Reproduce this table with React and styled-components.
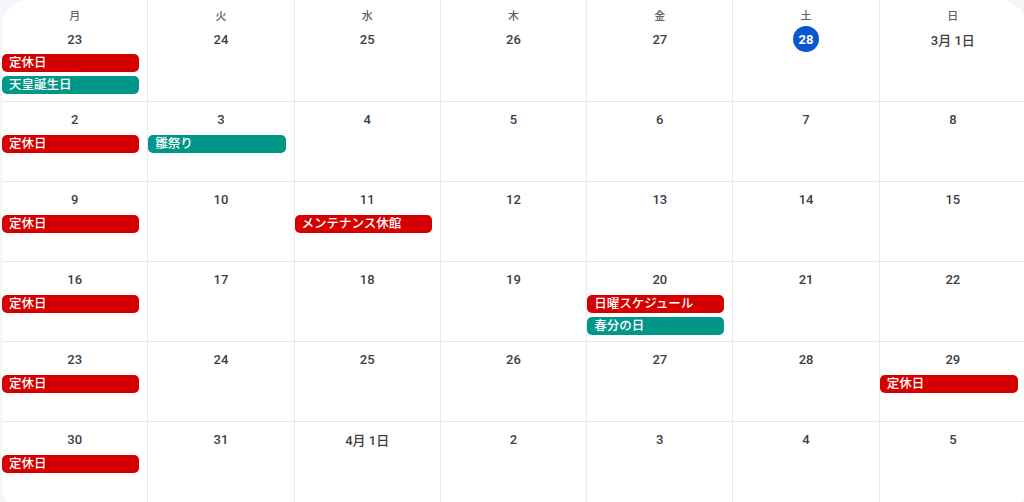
import React from "react";
import styled, { createGlobalStyle } from "styled-components";

const RED = "#d50000";
const TEAL = "#009688";

const GlobalStyle = createGlobalStyle`
  html, body {
    margin: 0;
    padding: 0;
    height: 502px;
    overflow: hidden;
    background: #f3f6fb;
  }
  body {
    font-family: Roboto, "Noto Sans CJK JP", "Noto Sans", sans-serif;
  }
`;

const Board = styled.div`
  width: 1024px;
  margin-left: 2px;
  height: 512px;
  background: #ffffff;
  border-radius: 26px;
  overflow: hidden;
  display: grid;
  grid-template-columns: repeat(7, 1fr);
  grid-template-rows: 102px repeat(4, 80px) 90px;
`;

const Cell = styled.div`
  box-sizing: border-box;
  border-right: ${(p) => (p.$last ? "none" : "1px solid #e3e8f0")};
  border-bottom: 1px solid #e3e8f0;
  padding: ${(p) => (p.$first ? "8px" : "4px")} 8px 0 0;
  display: flex;
  flex-direction: column;
  min-width: 0;
`;

const Weekday = styled.div`
  height: 18px;
  line-height: 18px;
  text-align: center;
  font-size: 11px;
  font-weight: 500;
  color: #5f6368;
  padding-left: 8px;
`;

const DateLine = styled.div`
  height: 26px;
  display: flex;
  align-items: center;
  justify-content: center;
  padding-left: 8px;
  margin-bottom: ${(p) => (p.$first ? "2px" : "3px")};
`;

const DateNum = styled.span`
  font-size: 13px;
  color: ${(p) => (p.$today ? "#ffffff" : "#3c4043")};
  background: ${(p) => (p.$today ? "#0b57d0" : "transparent")};
  border-radius: 50%;
  min-width: ${(p) => (p.$today ? "26px" : "0")};
  height: 26px;
  display: flex;
  align-items: center;
  justify-content: center;
  font-weight: ${(p) => (p.$today ? 700 : 500)};
`;

const Chips = styled.div`
  display: flex;
  flex-direction: column;
  gap: 4px;
`;

const Chip = styled.div`
  height: 18px;
  line-height: 18px;
  border-radius: 5px;
  background: ${(p) => p.$color};
  color: #ffffff;
  font-size: 12.5px;
  font-weight: 500;
  padding-left: 7px;
  white-space: nowrap;
  overflow: hidden;
`;

const weekdays = ["月", "火", "水", "木", "金", "土", "日"];

const h = (t) => ({ t, c: RED });
const g = (t) => ({ t, c: TEAL });

const weeks = [
  [
    { d: "23", e: [h("定休日"), g("天皇誕生日")] },
    { d: "24" },
    { d: "25" },
    { d: "26" },
    { d: "27" },
    { d: "28", today: true },
    { d: "3月 1日" },
  ],
  [
    { d: "2", e: [h("定休日")] },
    { d: "3", e: [g("雛祭り")] },
    { d: "4" },
    { d: "5" },
    { d: "6" },
    { d: "7" },
    { d: "8" },
  ],
  [
    { d: "9", e: [h("定休日")] },
    { d: "10" },
    { d: "11", e: [h("メンテナンス休館")] },
    { d: "12" },
    { d: "13" },
    { d: "14" },
    { d: "15" },
  ],
  [
    { d: "16", e: [h("定休日")] },
    { d: "17" },
    { d: "18" },
    { d: "19" },
    { d: "20", e: [h("日曜スケジュール"), g("春分の日")] },
    { d: "21" },
    { d: "22" },
  ],
  [
    { d: "23", e: [h("定休日")] },
    { d: "24" },
    { d: "25" },
    { d: "26" },
    { d: "27" },
    { d: "28" },
    { d: "29", e: [h("定休日")] },
  ],
  [
    { d: "30", e: [h("定休日")] },
    { d: "31" },
    { d: "4月 1日" },
    { d: "2" },
    { d: "3" },
    { d: "4" },
    { d: "5" },
  ],
];

const App = () => {
  return (
    <>
      <GlobalStyle />
      <Board>
        {weeks.map((week, wi) =>
          week.map((day, di) => (
            <Cell key={`${wi}-${di}`} $first={wi === 0} $last={di === 6}>
              {wi === 0 && <Weekday>{weekdays[di]}</Weekday>}
              <DateLine $first={wi === 0}>
                <DateNum $today={day.today}>{day.d}</DateNum>
              </DateLine>
              {day.e && (
                <Chips>
                  {day.e.map((ev) => (
                    <Chip key={ev.t} $color={ev.c}>
                      {ev.t}
                    </Chip>
                  ))}
                </Chips>
              )}
            </Cell>
          ))
        )}
      </Board>
    </>
  );
};

export default App;
